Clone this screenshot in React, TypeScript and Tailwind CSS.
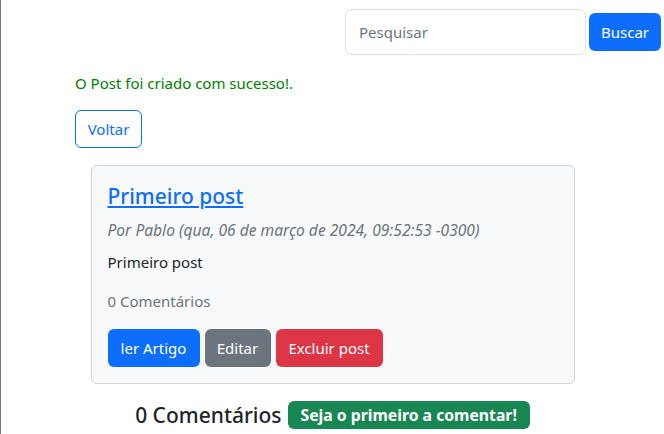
import React from "react";

export default function App() {
  const font = { fontFamily: '"Noto Sans", "Open Sans", sans-serif' };
  return (
    <div
      className="w-[664px] h-[434px] overflow-hidden bg-white border-l border-[#777777] text-[15px] text-[#212529] leading-[24px]"
      style={font}
    >
      <div className="flex justify-end items-center gap-[3px] pt-[9px] pr-[3px]">
        <input
          className="w-[241px] h-[46px] border border-[#dee2e6] rounded-[6px] px-[13px] text-[15px] placeholder-[#6c757d] outline-none"
          placeholder="Pesquisar"
        />
        <button className="w-[72px] h-[38px] bg-[#0d6efd] text-white rounded-[6px] text-[15px]">
          Buscar
        </button>
      </div>

      <div className="pl-[74px] mt-[16px]">
        <p className="text-[#008000]">O Post foi criado com sucesso!.</p>
        <button className="mt-[15px] h-[38px] w-[67px] border border-[#0d6efd] text-[#0d6efd] rounded-[6px]">
          Voltar
        </button>
      </div>

      <div className="mx-auto mt-[17px] w-[484px] h-[219px] bg-[#f8f9fa] border border-[#d3d4d5] rounded-[6px] px-[16px] pt-[16px]">
        <a href="#" className="text-[21px] leading-[28px] text-[#0d6efd] underline font-medium">
          Primeiro post
        </a>
        <p className="mt-[8px] italic text-[#6c757d] text-[15.6px]">
          Por Pablo (qua, 06 de março de 2024, 09:52:53 -0300)
        </p>
        <p className="mt-[8px]">Primeiro post</p>
        <p className="mt-[15px] text-[#6c757d]">0 Comentários</p>
        <div className="flex gap-[5px] mt-[16px]">
          <button className="h-[38px] w-[92px] bg-[#0d6efd] text-white rounded-[6px]">ler Artigo</button>
          <button className="h-[38px] w-[66px] bg-[#6c757d] text-white rounded-[6px]">Editar</button>
          <button className="h-[38px] w-[107px] bg-[#dc3545] text-white rounded-[6px]">Excluir post</button>
        </div>
      </div>

      <div className="flex justify-center items-center gap-[6px] mt-[17px]">
        <span className="text-[21px] leading-[27px] font-medium">0 Comentários</span>
        <span className="bg-[#198754] text-white font-bold text-[15.75px] leading-[16px] px-[13px] py-[6px] rounded-[6px]">
          Seja o primeiro a comentar!
        </span>
      </div>
    </div>
  );
}
